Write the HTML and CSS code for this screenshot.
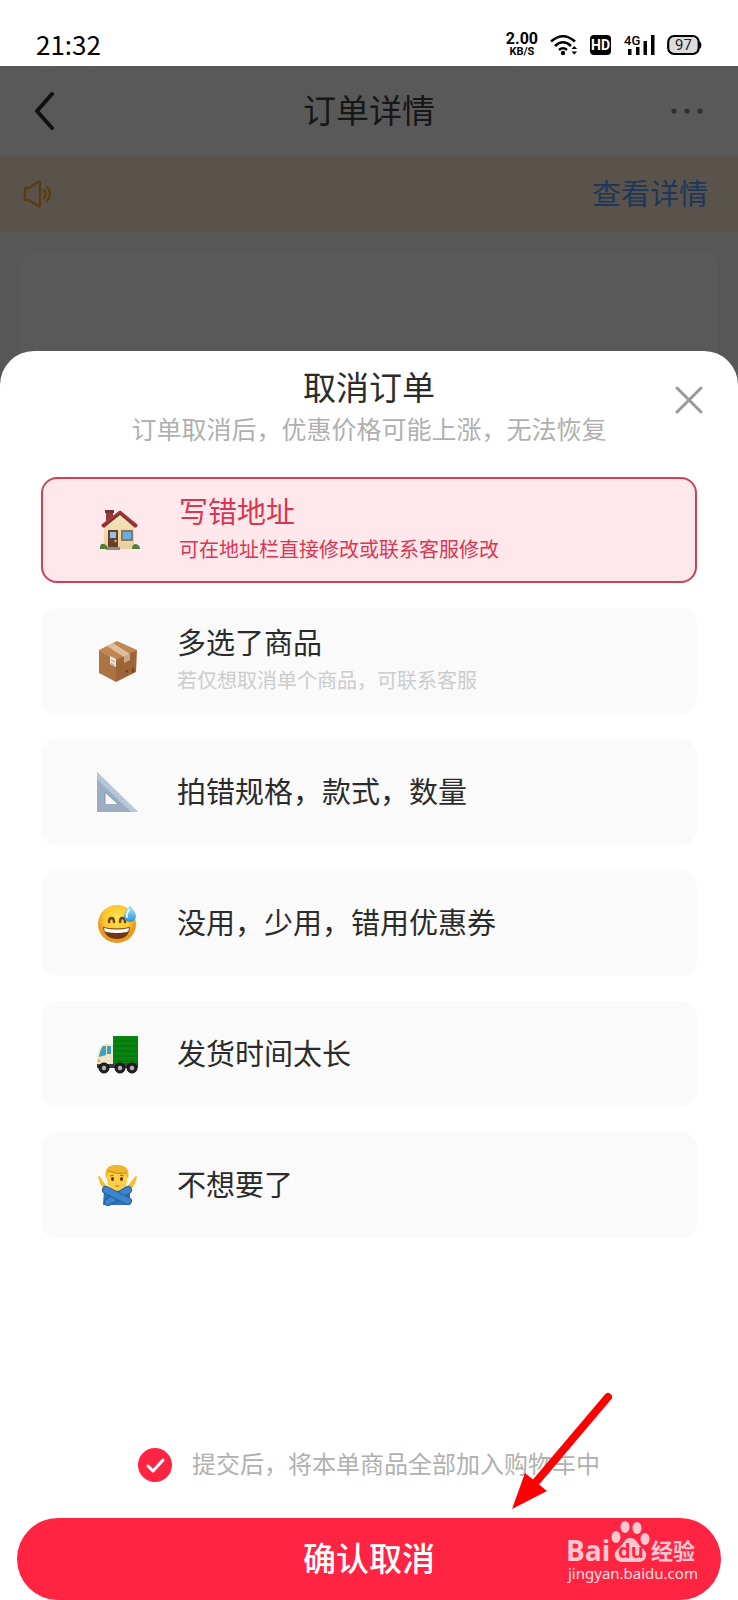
FILE: index.html
```html
<!DOCTYPE html>
<html lang="zh-CN">
<head>
  <meta charset="UTF-8">
  <meta name="viewport" content="width=device-width, initial-scale=1.0">
  <title>订单详情</title>
  <link rel="stylesheet" href="styles.css">
</head>
<body>
  <div class="status-bar">
    <span class="clock">21:32</span>
    <div class="status-icons">
      <div class="net-speed"><b>2.00</b><small>KB/S</small></div>
      <svg width="28" height="22" viewBox="0 0 28 22" fill="none" stroke="#000" stroke-width="2.6">
        <path d="M1 7.5Q13 -3 25 7.5M5 12Q13 4.5 21 12M9 16Q13 12.5 17 16"/>
        <circle cx="13" cy="19" r="2.2" fill="#000" stroke="none"/>
        <path d="M21.5 15l2.8-3 2.8 3zM21.5 17.5l2.8 3 2.8-3z" fill="#000" stroke="none"/>
      </svg>
      <svg width="22" height="22" viewBox="0 0 22 22">
        <rect x="0" y="1" width="21" height="20" rx="4"/>
        <text class="hd-text" x="10.5" y="16" text-anchor="middle">HD</text>
      </svg>
      <svg width="31" height="22" viewBox="0 0 31 22">
        <text class="net-text" x="0" y="11">4G</text>
        <path d="M4 15h3.5v6H4zM12 13h3.5v8H12zM19.5 7H23v14h-3.5zM27 1h3.5v20H27z"/>
      </svg>
      <svg width="35" height="22" viewBox="0 0 35 22">
        <rect x="1.2" y="2" width="30.5" height="18" rx="6" fill="#ddd" stroke="#000" stroke-width="2.2"/>
        <path d="M32 7q2.5 1 2.5 4t-2.5 4z"/>
        <text class="battery-text" x="16.5" y="16" text-anchor="middle">97</text>
      </svg>
    </div>
  </div>

  <div class="stage">
    <div class="page">
      <header class="nav">
        <button class="icon-btn" type="button" aria-label="返回">
          <svg width="20" height="38" viewBox="0 0 20 38" fill="none" stroke="#333" stroke-width="4" stroke-linecap="round" stroke-linejoin="round"><path d="M17 2L2 19l15 17"/></svg>
        </button>
        <h1>订单详情</h1>
        <button class="icon-btn more-btn" type="button" aria-label="更多">
          <svg width="32" height="6" viewBox="0 0 32 6" fill="#888"><circle cx="3" cy="3" r="2.6"/><circle cx="16" cy="3" r="2.6"/><circle cx="29" cy="3" r="2.6"/></svg>
        </button>
      </header>
      <div class="notice">
        <svg width="30" height="28" viewBox="0 0 30 28" fill="none" stroke="#ffae35" stroke-width="2.4" stroke-linejoin="round" stroke-linecap="round">
          <path d="M2 8h4l9-6q2-1 2 1v22q0 2-2 1l-9-6H2zM21 10q3 4 0 8M24 7q6 7 0 14"/>
        </svg>
        <a href="#">查看详情</a>
      </div>
      <div class="order-card"></div>
    </div>

    <div class="mask">
      <form class="sheet">
        <div class="sheet-head">
          <h2>取消订单</h2>
          <p>订单取消后，优惠价格可能上涨，无法恢复</p>
          <button class="icon-btn close-btn" type="button" aria-label="关闭">
            <svg width="28" height="28" viewBox="0 0 28 28" stroke="#999" stroke-width="3" stroke-linecap="round"><path d="M2 2l24 24M26 2L2 26"/></svg>
          </button>
        </div>

        <div class="reasons">
          <label class="reason">
            <input type="radio" name="reason" value="address" checked>
            <svg class="emoji" viewBox="0 0 42 42">
              <defs><linearGradient id="wall" x2="0" y2="1"><stop stop-color="#f8e6ba"/><stop offset="1" stop-color="#e5cf9c"/></linearGradient></defs>
              <path d="M7 2h7v9l-7 6z" fill="#8e3c39"/><path d="M6 1h9v3H6z" fill="#743033"/>
              <path d="M5 18L21 4l14 14v22H5z" fill="url(#wall)"/>
              <path d="M2 16L20 2q1-1 2 0l17 14-3 3L21 6 5 19z" fill="#9e3939"/>
              <path d="M3 18L21 5l17 13" fill="none" stroke="#6e2527" stroke-width="1"/>
              <path d="M9 21h10v18H9z" fill="#6a3e2b"/><path d="M11 23h6v6h-6z" fill="#8cc5e8"/>
              <path d="M22 21h12v11H22z" fill="#8c7558"/><path d="M24 23h8v7h-8z" fill="#61b2e6"/>
              <circle cx="16.5" cy="32" r="1.2" fill="#e0b563"/><path d="M7 38h14v3H7z" fill="#928781"/>
              <path d="M1 39q0-5 4-4 4 1 3 5H1zM33 40q0-5 4-5 4 1 4 5z" fill="#527f31"/>
            </svg>
            <span class="reason-text"><strong>写错地址</strong><small>可在地址栏直接修改或联系客服修改</small></span>
          </label>
          <label class="reason">
            <input type="radio" name="reason" value="extra">
            <svg class="emoji" viewBox="0 0 42 42">
              <path d="M2 10L20 1l20 9-20 11z" fill="#bf8752"/>
              <path d="M2 10l17 10v22L2 33z" fill="#ad7443"/><path d="M19 20l21-10-1 22-20 10z" fill="#9c6437"/>
              <path d="M10 6l6-3 17 11-6 3z" fill="#dcc09d"/><path d="M27 17l6-3v6l-6 3z" fill="#c9ab8b"/>
              <path d="M13 16l6 3v8l-6-3z" fill="#e8e2da"/><path d="M14 20l4 2M14 23l3 2" stroke="#a3a09b" stroke-width="1"/>
              <path d="M28 31l4-2-2 4zM35 28l2-1v5l-2 1z" fill="#74411f"/>
            </svg>
            <span class="reason-text"><strong>多选了商品</strong><small>若仅想取消单个商品，可联系客服</small></span>
          </label>
          <label class="reason">
            <input type="radio" name="reason" value="spec">
            <svg class="emoji" viewBox="0 0 42 42">
              <path d="M0 1l41 40H0zM8 21v12h13z" fill="#9daec3" fill-rule="evenodd"/>
              <path d="M0 1l41 40h-7L0 8z" fill="#b9c9dd"/>
              <path d="M1 6l34 34" stroke="#a5b6cb" stroke-width="2" stroke-dasharray="1 3"/>
              <path d="M8 33V21l13 12" fill="none" stroke="#8297b0" stroke-width="1"/>
            </svg>
            <span class="reason-text"><strong>拍错规格，款式，数量</strong></span>
          </label>
          <label class="reason">
            <input type="radio" name="reason" value="coupon">
            <svg class="emoji" viewBox="0 0 42 42">
              <defs>
                <radialGradient id="face" cy=".35"><stop stop-color="#ffe656"/><stop offset=".7" stop-color="#fbc62e"/><stop offset="1" stop-color="#e99820"/></radialGradient>
                <linearGradient id="drop" x2="0" y2="1"><stop stop-color="#b9efff"/><stop offset="1" stop-color="#2296dd"/></linearGradient>
              </defs>
              <circle cx="20" cy="22" r="19" fill="url(#face)"/>
              <path d="M12 20q0-4 2.500-4t2.500 4M23 20q0-4 2.500-4t2.500 4" fill="none" stroke="#75420f" stroke-width="2.5" stroke-linecap="round"/>
              <path d="M6 25q14 3 27 0-1 12-13 12T6 25z" fill="#713714"/>
              <path d="M7 26q13 3 25 0 0 3-2 4-10 2-21 0-2-1-2-4z" fill="#fff"/>
              <path d="M33 3q6 8 6 11a6 6 0 0 1-12 0Q27 11 33 3z" fill="url(#drop)"/>
              <path d="M32 8q-3 4-2 7" fill="none" stroke="#e3faff" stroke-width="2" stroke-linecap="round"/>
            </svg>
            <span class="reason-text"><strong>没用，少用，错用优惠券</strong></span>
          </label>
          <label class="reason">
            <input type="radio" name="reason" value="slow">
            <svg class="emoji" viewBox="0 0 42 42">
              <path d="M16 3h25v29H16z" fill="#078511"/>
              <path d="M17 8h24M17 13h24M17 18h24M17 23h24M17 28h24" stroke="#056b0c" stroke-width="1"/>
              <path d="M6 11h10v24H0v-9q1-11 6-15z" fill="#eee5ca"/>
              <path d="M6 13h3v9l-7 2q1-7 4-11zM10 13h4v8h-4z" fill="#3fa0be"/>
              <path d="M0 31h16v-1h25v5H0z" fill="#3e3d40"/>
              <g fill="#222" stroke="#090909"><circle cx="7" cy="35" r="5"/><circle cx="23" cy="35" r="5"/><circle cx="35" cy="35" r="5"/></g>
              <g fill="#b4b4b7"><circle cx="7" cy="35" r="2.200"/><circle cx="23" cy="35" r="2.200"/><circle cx="35" cy="35" r="2.200"/></g>
              <circle cx="2" cy="28" r="1.5" fill="#eead35"/>
            </svg>
            <span class="reason-text"><strong>发货时间太长</strong></span>
          </label>
          <label class="reason">
            <input type="radio" name="reason" value="unwanted">
            <svg class="emoji" viewBox="0 0 42 42">
              <path d="M9 23L2 13l2 6 4 7zM31 23l8-10-2 6-4 7z" fill="#f7bd2d" stroke="#f7bd2d" stroke-width="2" stroke-linejoin="round"/>
              <path d="M7 26h26v15H6z" fill="#2d73bd"/>
              <path d="M10 9q0-7 10-7t10 7v9q-1 9-10 9t-10-9z" fill="#ffd047"/>
              <path d="M9 15Q6 1 19 1q15-1 12 14l-3-6q-9 1-16-1z" fill="#efb52b"/>
              <path d="M11 7q10 4 18 2" fill="none" stroke="#c9850c" stroke-width="1"/>
              <ellipse cx="15.5" cy="15" rx="1.5" ry="2" fill="#553218"/><ellipse cx="24.5" cy="15" rx="1.5" ry="2" fill="#553218"/>
              <path d="M13 12l4-1M23 11l4 1M18 22h4" fill="none" stroke="#a26c18" stroke-width="1.2"/>
              <path d="M31 26L11 38" stroke="#235b9c" stroke-width="8" stroke-linecap="round"/>
              <path d="M31 26L11 38" stroke="#3d84ce" stroke-width="6" stroke-linecap="round"/>
              <path d="M9 26l22 11" stroke="#235b9c" stroke-width="8" stroke-linecap="round"/>
              <path d="M9 26l22 11" stroke="#3d84ce" stroke-width="6" stroke-linecap="round"/>
            </svg>
            <span class="reason-text"><strong>不想要了</strong></span>
          </label>
        </div>

        <div class="sheet-foot">
          <label class="cart-check">
            <span class="tick">
              <input type="checkbox" name="cart" checked>
              <svg viewBox="0 0 34 34" fill="none" stroke="#fff" stroke-width="3" stroke-linecap="round" stroke-linejoin="round"><path d="M10 18l5 5 10-11"/></svg>
            </span>
            <span class="cart-text">提交后，将本单商品全部加入购物车中</span>
          </label>
          <button class="confirm-btn" type="submit">确认取消</button>
        </div>
      </form>
    </div>

    <!-- pointer to the confirm button -->
    <svg class="arrow" width="100" height="118" viewBox="0 0 100 118">
      <path d="M96 6L24 91" stroke="#fe0000" stroke-width="8" stroke-linecap="round"/>
      <path d="M0 118l13-36 22 18z" fill="#fe0000"/>
    </svg>

    <svg class="watermark" width="134" height="64" viewBox="0 0 134 64" fill="#fff">
      <g opacity=".75">
        <text class="wm-brand" x="0" y="41">Bai</text>
        <ellipse cx="50" cy="17" rx="4.5" ry="6"/><ellipse cx="59" cy="7" rx="4.5" ry="6"/>
        <ellipse cx="71" cy="8" rx="4.5" ry="6"/><ellipse cx="79" cy="19" rx="4.5" ry="6"/>
        <path d="M64 18c6 0 7 5 11 9 4 3 6 6 5 10-2 6-8 5-15 5s-14 1-16-5c-1-4 1-7 5-10 4-4 5-9 10-9z"/>
        <text class="wm-cn" x="85" y="39">经验</text>
      </g>
      <text class="wm-du" x="65" y="38" text-anchor="middle">du</text>
      <text class="wm-url" x="2" y="59" opacity=".85">jingyan.baidu.com</text>
    </svg>
  </div>
</body>
</html>
```
FILE: styles.css
```css
* {
  margin: 0;
  padding: 0;
  box-sizing: border-box;
}

body {
  display: flex;
  flex-direction: column;
  min-height: 100vh;
  font-family: "Noto Sans CJK SC", sans-serif;
  color: #2b2b2b;
  background: #fff;
}

button,
input {
  font: inherit;
  border: none;
  cursor: pointer;
}

.icon-btn {
  display: flex;
  background: none;
}

/* status bar */
.status-bar {
  display: flex;
  justify-content: space-between;
  align-items: center;
  height: 66px;
  padding: 24px 36px 0;
  color: #000;
}

.clock {
  padding-bottom: 3px;
  font-size: 26px;
  line-height: 32px;
}

.status-icons {
  display: flex;
  align-items: center;
  gap: 12px;
}

.net-speed {
  display: flex;
  flex-direction: column;
  align-items: center;
  font-family: Roboto, sans-serif;
}

.net-speed b {
  font-size: 16px;
  line-height: 14px;
}

.net-speed small {
  font-size: 11px;
  font-weight: bold;
  line-height: 12px;
}

.hd-text {
  font: bold 14px Roboto, sans-serif;
  fill: #fff;
}

.net-text {
  font: 500 13px Roboto, sans-serif;
}

.battery-text {
  font: 15px Roboto, sans-serif;
  fill: #222;
}

/* page under the mask */
.stage {
  position: relative;
  display: grid;
  flex: 1;
}

.page,
.mask {
  grid-area: 1 / 1;
}

.page {
  background: #f8f8f8;
}

.nav {
  display: grid;
  grid-template-columns: 1fr auto 1fr;
  align-items: center;
  height: 90px;
  padding: 0 35px;
  background: #fff;
}

.nav h1 {
  padding-bottom: 4px;
  color: #444;
  font-size: 33px;
  font-weight: 400;
  line-height: 48px;
}

.more-btn {
  justify-self: end;
}

.notice {
  display: flex;
  justify-content: space-between;
  align-items: center;
  height: 75px;
  padding: 0 30px 0 23px;
  background: #feedd8;
}

.notice a {
  padding-bottom: 4px;
  color: #55a0ff;
  font-size: 29px;
  text-decoration: none;
}

.order-card {
  height: 200px;
  margin: 21px 20px;
  border-radius: 16px;
  background: #fff;
}

.mask {
  position: relative;
  display: flex;
  padding-top: 285px;
  background: rgba(0, 0, 0, 0.65);
}

/* bottom sheet */
.sheet {
  flex: 1;
  display: flex;
  flex-direction: column;
  border-radius: 34px 34px 0 0;
  background: #fff;
}

.sheet-head {
  position: relative;
  padding-top: 11px;
  text-align: center;
}

.sheet-head h2 {
  font-size: 33px;
  font-weight: 400;
  line-height: 48px;
}

.sheet-head p {
  color: #b0b0b0;
  font-size: 25px;
  line-height: 36px;
}

.close-btn {
  position: absolute;
  top: 35px;
  right: 35px;
}

.reasons {
  display: flex;
  flex-direction: column;
  gap: 25px;
  padding: 31px 41px;
}

.reason {
  display: flex;
  align-items: center;
  min-height: 106px;
  padding: 0 56px;
  border-radius: 16px;
  background: #fafafa;
  cursor: pointer;
}

.reason input {
  appearance: none;
}

.emoji {
  width: 42px;
  height: 42px;
  margin-right: 38px;
}

.reason-text {
  display: flex;
  flex-direction: column;
  padding-bottom: 4px;
}

.reason strong {
  font-size: 29px;
  font-weight: 400;
  line-height: 42px;
}

.reason small {
  color: #ccc;
  font-size: 20px;
  line-height: 36px;
}

.reason:has(input:checked) {
  border: 2px solid #d04058;
  background: #ffe8eb;
}

.reason:has(input:checked) strong,
.reason:has(input:checked) small {
  color: #d93651;
}

/* footer */
.sheet-foot {
  margin-top: auto;
  padding: 0 17px;
}

.cart-check {
  display: flex;
  justify-content: center;
  align-items: center;
  gap: 20px;
  margin-bottom: 34px;
  color: #b0b0b0;
  font-size: 24px;
  line-height: 36px;
}

.cart-text {
  padding-bottom: 3px;
}

.tick {
  display: grid;
}

.tick input,
.tick svg {
  grid-area: 1 / 1;
  width: 34px;
  height: 34px;
}

.tick input {
  appearance: none;
  border: 2px solid #ccc;
  border-radius: 50%;
}

.tick input:checked {
  border-color: #ff2442;
  background: #ff2442;
}

.tick svg {
  pointer-events: none;
}

.confirm-btn {
  display: block;
  width: 100%;
  height: 82px;
  padding-bottom: 4px;
  border-radius: 41px;
  color: #fff;
  font-size: 33px;
  font-weight: 500;
  background: #ff2442;
}

.arrow {
  position: absolute;
  right: 126px;
  bottom: 91px;
  pointer-events: none;
}

.watermark {
  position: absolute;
  right: 38px;
  bottom: 16px;
  pointer-events: none;
}

.wm-brand {
  font: bold 28px "Open Sans", sans-serif;
}

.wm-cn {
  font: bold 22px "Noto Sans CJK SC", sans-serif;
}

.wm-du {
  font: bold 20px "Open Sans", sans-serif;
  fill: #ff2442;
}

.wm-url {
  font: 15px "Noto Sans", sans-serif;
}
```
